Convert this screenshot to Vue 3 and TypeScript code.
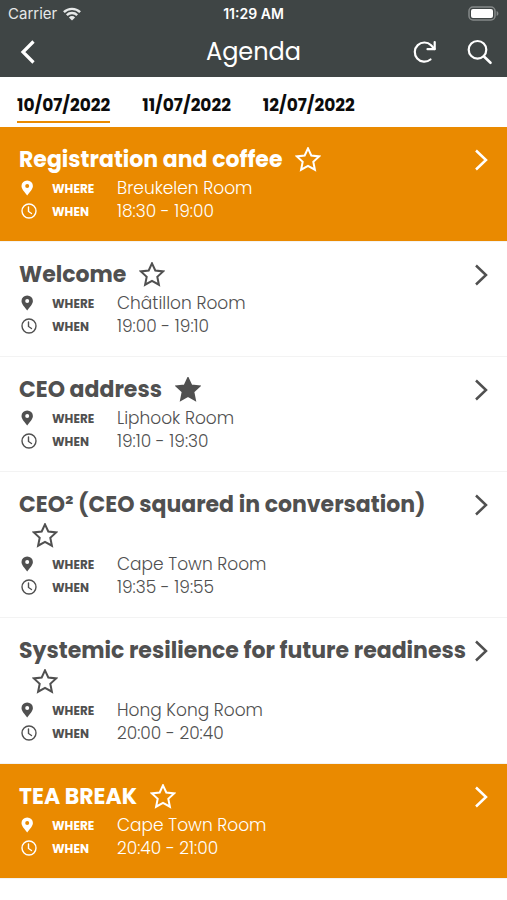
<script setup lang="ts">
import { ref } from 'vue'

interface Session {
  id: number
  title: string
  where: string
  when: string
  starred: boolean
  highlight: boolean
}

const days: string[] = ['10/07/2022', '11/07/2022', '12/07/2022']
const activeDay = ref(days[0])

const sessions = ref<Session[]>([
  { id: 1, title: 'Registration and coffee', where: 'Breukelen Room', when: '18:30 - 19:00', starred: false, highlight: true },
  { id: 2, title: 'Welcome', where: 'Châtillon Room', when: '19:00 - 19:10', starred: false, highlight: false },
  { id: 3, title: 'CEO address', where: 'Liphook Room', when: '19:10 - 19:30', starred: true, highlight: false },
  { id: 4, title: 'CEO² (CEO squared in conversation)', where: 'Cape Town Room', when: '19:35 - 19:55', starred: false, highlight: false },
  { id: 5, title: 'Systemic resilience for future readiness', where: 'Hong Kong Room', when: '20:00 - 20:40', starred: false, highlight: false },
  { id: 6, title: 'TEA BREAK', where: 'Cape Town Room', when: '20:40 - 21:00', starred: false, highlight: true },
])
</script>

<template>
  <div class="app">
    <header class="header">
      <div class="status">
        <div class="carrier">
          <span>Carrier</span>
          <svg width="18" height="14" viewBox="0 0 18 14" aria-hidden="true">
            <g fill="none" stroke="currentColor" stroke-width="2.4">
              <path d="M0.9 5.2a11.5 11.5 0 0 1 16.2 0" />
              <path d="M3.8 8.2a7.4 7.4 0 0 1 10.4 0" />
            </g>
            <path d="M9 13.6 5.9 10.4a4.4 4.4 0 0 1 6.2 0z" fill="currentColor" />
          </svg>
        </div>
        <span class="clock">11:29 AM</span>
        <div class="battery">
          <svg width="31" height="15" viewBox="0 0 31 15" aria-hidden="true">
            <rect x="1" y="1" width="26" height="13" rx="4" fill="none" stroke="#858989" stroke-width="1.5" />
            <rect x="3" y="3" width="22" height="9" rx="2" fill="#fff" />
            <path d="M28.6 5v5c1.2-.5 1.8-1.4 1.8-2.5s-.6-2-1.8-2.5z" fill="#858989" />
          </svg>
        </div>
      </div>
      <nav class="bar">
        <div class="side">
          <button class="back" type="button" aria-label="Back">
            <svg width="18" height="24" viewBox="0 0 18 24" aria-hidden="true">
              <path d="M15.500 1.500 5 12l10.500 10.500" fill="none" stroke="currentColor" stroke-width="3.2" />
            </svg>
          </button>
        </div>
        <h1>Agenda</h1>
        <div class="side actions">
          <button type="button" aria-label="Refresh">
            <svg width="26" height="26" viewBox="0 0 26 26" aria-hidden="true">
              <g fill="none" stroke="currentColor" stroke-width="2.2" stroke-linecap="round" stroke-linejoin="round">
                <path d="M18.500 20.500a9.600 9.600 0 1 1 .6-14.300l3.400 3.800" />
                <path d="M22.700 3v7.200h-7.200" />
              </g>
            </svg>
          </button>
          <button type="button" aria-label="Search">
            <svg width="26" height="26" viewBox="0 0 26 26" aria-hidden="true">
              <g fill="none" stroke="currentColor" stroke-width="2.2" stroke-linecap="round">
                <circle cx="10.500" cy="10.800" r="8.800" />
                <path d="m17 17.500 6.500 6.300" stroke-width="2.6" />
              </g>
            </svg>
          </button>
        </div>
      </nav>
    </header>

    <div class="tabs" role="tablist">
      <button
        v-for="day in days"
        :key="day"
        type="button"
        role="tab"
        class="tab"
        :class="{ active: day === activeDay }"
        :aria-selected="day === activeDay"
        @click="activeDay = day"
      >{{ day }}</button>
    </div>

    <ul class="sessions">
      <li v-for="session in sessions" :key="session.id" class="session" :class="{ highlight: session.highlight }">
        <div class="details">
          <h2>{{ session.title }}<wbr /><button
              class="star"
              type="button"
              aria-label="Favourite"
              :aria-pressed="session.starred"
              @click="session.starred = !session.starred"
            ><svg width="26" height="26" viewBox="0 1 26 26" aria-hidden="true">
              <path
                d="m13 2.300 3.300 7.200 7.900.9-5.900 5.400 1.600 7.900-6.900-3.900-6.900 3.900 1.600-7.900-5.900-5.400 7.900-.9z"
                :fill="session.starred ? 'currentColor' : 'none'"
                stroke="currentColor"
                stroke-width="2"
              />
            </svg></button></h2>
          <dl>
            <div class="meta">
              <dt>
                <svg width="18" height="16" viewBox="0 0 18 16" aria-hidden="true">
                  <path fill-rule="evenodd" fill="currentColor" d="M8.200.4A5.700 5.700 0 0 0 2.500 6.100C2.500 9.400 5.700 12 8.200 15.600c2.500-3.600 5.700-6.200 5.700-9.500A5.700 5.700 0 0 0 8.200.4zM8.200 4.100a2 2 0 1 1 0 4 2 2 0 0 1 0-4z" />
                </svg>
                <span>WHERE</span>
              </dt>
              <dd>{{ session.where }}</dd>
            </div>
            <div class="meta">
              <dt>
                <svg width="18" height="16" viewBox="0 0 18 16" aria-hidden="true">
                  <g fill="none" stroke="currentColor" stroke-width="1.4" stroke-linecap="round">
                    <circle cx="10" cy="8" r="7" />
                    <path d="M9.500 4v4.500l3 2" />
                  </g>
                </svg>
                <span>WHEN</span>
              </dt>
              <dd>{{ session.when }}</dd>
            </div>
          </dl>
        </div>
        <button class="open" type="button" aria-label="Open session">
          <svg width="14" height="24" viewBox="0 0 14 24" aria-hidden="true">
            <path d="m2 2.500 10 9.500-10 9.500" fill="none" stroke="currentColor" stroke-width="2.5" />
          </svg>
        </button>
      </li>
    </ul>
  </div>
</template>

<style>
body {
  background: #fff;
}
</style>

<style scoped>
.app {
  font-family: Poppins, Inter, 'Liberation Sans', sans-serif;
  color: #505050;
}

button {
  padding: 0;
  border: 0;
  background: none;
  color: inherit;
  font: inherit;
  cursor: pointer;
}

svg {
  display: block;
}

.header {
  background: #3f4545;
  color: #fff;
}

.status {
  display: grid;
  grid-template-columns: 1fr auto 1fr;
  align-items: center;
  height: 27px;
  padding: 0 8px;
  font-family: Inter, 'Liberation Sans', sans-serif;
  font-size: 15px;
}

.carrier {
  display: flex;
  align-items: center;
  gap: 6px;
  color: #e6e8e8;
}

.clock {
  font-size: 14px;
  font-weight: 600;
}

.battery {
  display: flex;
  justify-content: flex-end;
}

.bar {
  display: grid;
  grid-template-columns: 1fr auto 1fr;
  align-items: center;
  height: 50px;
  padding: 0 14px;
}

h1 {
  margin: 0;
  font-size: 24px;
  font-weight: 400;
  line-height: 32px;
}

.side {
  display: flex;
}

.back {
  padding-left: 4px;
}

.actions {
  justify-content: flex-end;
  gap: 29px;
}

.tabs {
  display: flex;
  gap: 32px;
  height: 46px;
  padding: 0 17px 4px;
}

.tab {
  padding-top: 12px;
  border-bottom: 2px solid transparent;
  color: #0c0c0c;
  font-size: 17px;
  font-weight: 700;
  line-height: 32px;
}

.tab.active {
  border-color: #ea8a00;
}

.sessions {
  margin: 0;
  padding: 0;
  list-style: none;
}

.session {
  display: flex;
  align-items: flex-start;
  padding: 17px 19px 19px;
  border-bottom: 1px solid #f3f3f3;
}

.session.highlight {
  background: #ea8a00;
  color: #fff;
}

.details {
  flex: 1;
  min-width: 0;
}

h2 {
  margin: 0 0 1px;
  font-size: 22px;
  font-weight: 700;
  line-height: 31px;
}

.star {
  display: inline-flex;
  align-items: center;
  height: 31px;
  margin: 0 13px;
  vertical-align: top;
}

dl {
  margin: 0;
}

.meta {
  display: flex;
  align-items: center;
  height: 23px;
}

dt {
  display: flex;
  flex: none;
  align-items: center;
  gap: 15px;
  width: 98px;
  font-size: 12px;
  font-weight: 700;
}

dt span {
  padding-top: 2px;
}

dd {
  margin: 0;
  font-size: 17px;
  font-weight: 300;
}

.open {
  display: flex;
  align-items: center;
  height: 31px;
}
</style>
